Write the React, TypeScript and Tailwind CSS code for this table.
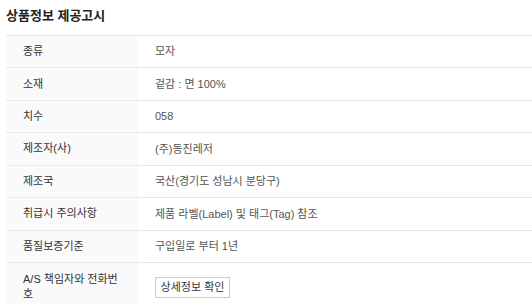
const rows: { label: string; value?: string; button?: string }[] = [
  { label: '종류', value: '모자' },
  { label: '소재', value: '겉감 : 면 100%' },
  { label: '치수', value: '058' },
  { label: '제조자(사)', value: '(주)동진레저' },
  { label: '제조국', value: '국산(경기도 성남시 분당구)' },
  { label: '취급시 주의사항', value: '제품 라벨(Label) 및 태그(Tag) 참조' },
  { label: '품질보증기준', value: '구입일로 부터 1년' },
  { label: 'A/S 책임자와 전화번호', button: '상세정보 확인' },
];

export default function App() {
  return (
    <div className="w-[532px] h-[304px] overflow-hidden bg-white font-['Liberation_Sans','Noto_Sans_CJK_KR',sans-serif]">
      <h2 className="h-[35px] pl-[6px] pt-[7px] text-[13px] leading-[18px] font-bold text-[#222]">
        상품정보 제공고시
      </h2>
      <div className="ml-[6px] border-t border-[#e8e8e8]">
        {rows.map((row) => (
          <div
            key={row.label}
            className={`flex border-b border-[#e8e8e8] ${row.button ? 'h-[50px]' : 'h-[32.43px]'}`}
          >
            <div className="w-[132px] shrink-0 bg-[#fafafa] pl-[17px] pr-[17px] flex items-center text-[11px] leading-[15px] text-[#333]">
              {row.label}
            </div>
            <div className="flex-1 pl-[17px] flex items-center text-[11px] text-[#555]">
              {row.button ? (
                <button className="h-[21px] w-[75px] border border-[#ccc] bg-white text-[11px] leading-[19px] text-[#333]">
                  {row.button}
                </button>
              ) : (
                row.value
              )}
            </div>
          </div>
        ))}
      </div>
    </div>
  );
}
